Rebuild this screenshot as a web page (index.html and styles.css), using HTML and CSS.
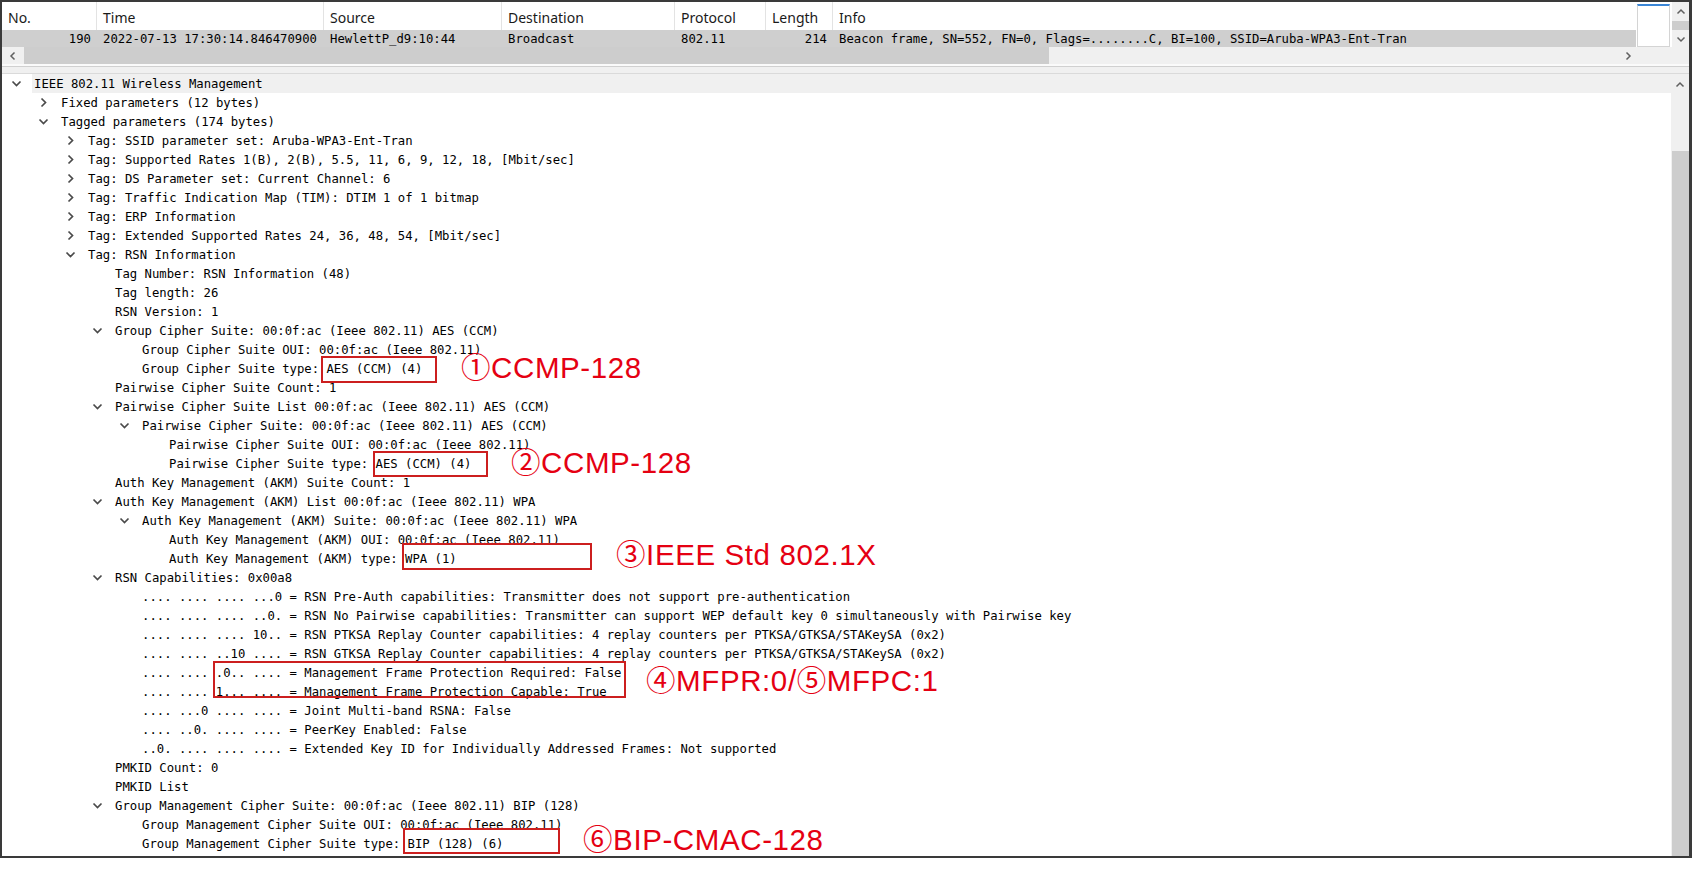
FILE: index.html
```html
<!DOCTYPE html>
<html>

<head>
  <meta charset="UTF-8">
  <title>802.11 Beacon - RSN Information</title>
  <link rel="stylesheet" href="styles.css">
</head>

<body>
  <div class="window">

    <!-- packet list -->
    <div class="top">
      <div class="plist">
        <div class="cols phead">
          <div class="cell">No.</div>
          <div class="cell">Time</div>
          <div class="cell">Source</div>
          <div class="cell">Destination</div>
          <div class="cell">Protocol</div>
          <div class="cell">Length</div>
          <div class="cell last">Info</div>
        </div>
        <div class="cols prow">
          <div class="cell num">190</div>
          <div class="cell">2022-07-13 17:30:14.846470900</div>
          <div class="cell">HewlettP_d9:10:44</div>
          <div class="cell">Broadcast</div>
          <div class="cell">802.11</div>
          <div class="cell num">214</div>
          <div class="cell last">Beacon frame, SN=552, FN=0, Flags=........C, BI=100, SSID=Aruba-WPA3-Ent-Tran</div>
        </div>
      </div>
      <div class="mapcol">
        <div class="minimap"></div>
      </div>
      <div class="vscroll">
        <div class="sarrow up"><svg viewBox="0 0 10 10"><path d="M1.5 6.5l3.5-3.5 3.5 3.5"/></svg></div>
        <div class="vthumb"></div>
        <div class="sarrow down"><svg viewBox="0 0 10 10"><path d="M1.5 3.5l3.5 3.5 3.5-3.5"/></svg></div>
      </div>
    </div>

    <div class="hscroll">
      <div class="harrow left"><svg viewBox="0 0 10 10"><path d="M6.5 1.5l-3.5 3.5 3.5 3.5"/></svg></div>
      <div class="hthumb"></div>
      <div class="hspace"></div>
      <div class="harrow right"><svg viewBox="0 0 10 10"><path d="M3.5 1.5l3.5 3.5-3.5 3.5"/></svg></div>
      <div class="corner"></div>
    </div>

    <div class="splitter"></div>

    <!-- packet details -->
    <div class="details">
      <div class="tree">
        <div class="row l0 focus"><span class="tog"><svg class="chev" viewBox="0 0 11 11"><path d="M1.5 3.5l4 4 4-4"/></svg></span><span class="txt">IEEE 802.11 Wireless Management</span></div>
        <div class="row l1"><span class="tog"><svg class="chev" viewBox="0 0 11 11"><path d="M3.5 1.5l4 4-4 4"/></svg></span><span class="txt">Fixed parameters (12 bytes)</span></div>
        <div class="row l1"><span class="tog"><svg class="chev" viewBox="0 0 11 11"><path d="M1.5 3.5l4 4 4-4"/></svg></span><span class="txt">Tagged parameters (174 bytes)</span></div>
        <div class="row l2"><span class="tog"><svg class="chev" viewBox="0 0 11 11"><path d="M3.5 1.5l4 4-4 4"/></svg></span><span class="txt">Tag: SSID parameter set: Aruba-WPA3-Ent-Tran</span></div>
        <div class="row l2"><span class="tog"><svg class="chev" viewBox="0 0 11 11"><path d="M3.5 1.5l4 4-4 4"/></svg></span><span class="txt">Tag: Supported Rates 1(B), 2(B), 5.5, 11, 6, 9, 12, 18, [Mbit/sec]</span></div>
        <div class="row l2"><span class="tog"><svg class="chev" viewBox="0 0 11 11"><path d="M3.5 1.5l4 4-4 4"/></svg></span><span class="txt">Tag: DS Parameter set: Current Channel: 6</span></div>
        <div class="row l2"><span class="tog"><svg class="chev" viewBox="0 0 11 11"><path d="M3.5 1.5l4 4-4 4"/></svg></span><span class="txt">Tag: Traffic Indication Map (TIM): DTIM 1 of 1 bitmap</span></div>
        <div class="row l2"><span class="tog"><svg class="chev" viewBox="0 0 11 11"><path d="M3.5 1.5l4 4-4 4"/></svg></span><span class="txt">Tag: ERP Information</span></div>
        <div class="row l2"><span class="tog"><svg class="chev" viewBox="0 0 11 11"><path d="M3.5 1.5l4 4-4 4"/></svg></span><span class="txt">Tag: Extended Supported Rates 24, 36, 48, 54, [Mbit/sec]</span></div>
        <div class="row l2"><span class="tog"><svg class="chev" viewBox="0 0 11 11"><path d="M1.5 3.5l4 4 4-4"/></svg></span><span class="txt">Tag: RSN Information</span></div>
        <div class="row l3"><span class="tog"></span><span class="txt">Tag Number: RSN Information (48)</span></div>
        <div class="row l3"><span class="tog"></span><span class="txt">Tag length: 26</span></div>
        <div class="row l3"><span class="tog"></span><span class="txt">RSN Version: 1</span></div>
        <div class="row l3"><span class="tog"><svg class="chev" viewBox="0 0 11 11"><path d="M1.5 3.5l4 4 4-4"/></svg></span><span class="txt">Group Cipher Suite: 00:0f:ac (Ieee 802.11) AES (CCM)</span></div>
        <div class="row l4"><span class="tog"></span><span class="txt">Group Cipher Suite OUI: 00:0f:ac (Ieee 802.11)</span></div>
        <div class="row l4"><span class="tog"></span><span class="txt">Group Cipher Suite type: AES (CCM) (4)</span></div>
        <div class="row l3"><span class="tog"></span><span class="txt">Pairwise Cipher Suite Count: 1</span></div>
        <div class="row l3"><span class="tog"><svg class="chev" viewBox="0 0 11 11"><path d="M1.5 3.5l4 4 4-4"/></svg></span><span class="txt">Pairwise Cipher Suite List 00:0f:ac (Ieee 802.11) AES (CCM)</span></div>
        <div class="row l4"><span class="tog"><svg class="chev" viewBox="0 0 11 11"><path d="M1.5 3.5l4 4 4-4"/></svg></span><span class="txt">Pairwise Cipher Suite: 00:0f:ac (Ieee 802.11) AES (CCM)</span></div>
        <div class="row l5"><span class="tog"></span><span class="txt">Pairwise Cipher Suite OUI: 00:0f:ac (Ieee 802.11)</span></div>
        <div class="row l5"><span class="tog"></span><span class="txt">Pairwise Cipher Suite type: AES (CCM) (4)</span></div>
        <div class="row l3"><span class="tog"></span><span class="txt">Auth Key Management (AKM) Suite Count: 1</span></div>
        <div class="row l3"><span class="tog"><svg class="chev" viewBox="0 0 11 11"><path d="M1.5 3.5l4 4 4-4"/></svg></span><span class="txt">Auth Key Management (AKM) List 00:0f:ac (Ieee 802.11) WPA</span></div>
        <div class="row l4"><span class="tog"><svg class="chev" viewBox="0 0 11 11"><path d="M1.5 3.5l4 4 4-4"/></svg></span><span class="txt">Auth Key Management (AKM) Suite: 00:0f:ac (Ieee 802.11) WPA</span></div>
        <div class="row l5"><span class="tog"></span><span class="txt">Auth Key Management (AKM) OUI: 00:0f:ac (Ieee 802.11)</span></div>
        <div class="row l5"><span class="tog"></span><span class="txt">Auth Key Management (AKM) type: WPA (1)</span></div>
        <div class="row l3"><span class="tog"><svg class="chev" viewBox="0 0 11 11"><path d="M1.5 3.5l4 4 4-4"/></svg></span><span class="txt">RSN Capabilities: 0x00a8</span></div>
        <div class="row l4"><span class="tog"></span><span class="txt">.... .... .... ...0 = RSN Pre-Auth capabilities: Transmitter does not support pre-authentication</span></div>
        <div class="row l4"><span class="tog"></span><span class="txt">.... .... .... ..0. = RSN No Pairwise capabilities: Transmitter can support WEP default key 0 simultaneously with Pairwise key</span></div>
        <div class="row l4"><span class="tog"></span><span class="txt">.... .... .... 10.. = RSN PTKSA Replay Counter capabilities: 4 replay counters per PTKSA/GTKSA/STAKeySA (0x2)</span></div>
        <div class="row l4"><span class="tog"></span><span class="txt">.... .... ..10 .... = RSN GTKSA Replay Counter capabilities: 4 replay counters per PTKSA/GTKSA/STAKeySA (0x2)</span></div>
        <div class="row l4"><span class="tog"></span><span class="txt">.... .... .0.. .... = Management Frame Protection Required: False</span></div>
        <div class="row l4"><span class="tog"></span><span class="txt">.... .... 1... .... = Management Frame Protection Capable: True</span></div>
        <div class="row l4"><span class="tog"></span><span class="txt">.... ...0 .... .... = Joint Multi-band RSNA: False</span></div>
        <div class="row l4"><span class="tog"></span><span class="txt">.... ..0. .... .... = PeerKey Enabled: False</span></div>
        <div class="row l4"><span class="tog"></span><span class="txt">..0. .... .... .... = Extended Key ID for Individually Addressed Frames: Not supported</span></div>
        <div class="row l3"><span class="tog"></span><span class="txt">PMKID Count: 0</span></div>
        <div class="row l3"><span class="tog"></span><span class="txt">PMKID List</span></div>
        <div class="row l3"><span class="tog"><svg class="chev" viewBox="0 0 11 11"><path d="M1.5 3.5l4 4 4-4"/></svg></span><span class="txt">Group Management Cipher Suite: 00:0f:ac (Ieee 802.11) BIP (128)</span></div>
        <div class="row l4"><span class="tog"></span><span class="txt">Group Management Cipher Suite OUI: 00:0f:ac (Ieee 802.11)</span></div>
        <div class="row l4"><span class="tog"></span><span class="txt">Group Management Cipher Suite type: BIP (128) (6)</span></div>

        <!-- red annotations -->
        <div class="mark m1"></div>
        <div class="note n1">①CCMP-128</div>
        <div class="mark m2"></div>
        <div class="note n2">②CCMP-128</div>
        <div class="mark m3"></div>
        <div class="note n3">③IEEE Std 802.1X</div>
        <div class="mark m4"></div>
        <div class="note n4">④MFPR:0/⑤MFPC:1</div>
        <div class="mark m6"></div>
        <div class="note n6">⑥BIP-CMAC-128</div>
      </div>
      <div class="dscroll">
        <div class="sarrow dtop"><svg viewBox="0 0 10 10"><path d="M1.5 6.5l3.5-3.5 3.5 3.5"/></svg></div>
        <div class="dtrack"></div>
        <div class="dthumb"></div>
      </div>
    </div>

  </div>
</body>

</html>
```

FILE: styles.css
```css
html,
body {
  margin: 0;
  padding: 0;
  background: #ffffff;
}

.window {
  width: 1692px;
  height: 858px;
  box-sizing: border-box;
  border: 2px solid #3a3a3a;
  border-right-width: 3px;
  display: flex;
  flex-direction: column;
  overflow: hidden;
  font-family: "DejaVu Sans Mono", "Liberation Mono", monospace;
  font-size: 12.25px;
  color: #000;
}

/* packet list */

.top {
  display: flex;
  height: 45px;
  flex: none;
}

.plist {
  flex: 1;
  background: #fff;
}

.cols {
  display: grid;
  grid-template-columns: 95px 227px 178px 173px 91px 67px 1fr;
}

.cell {
  padding: 0 6px;
  white-space: pre;
  overflow: hidden;
}

.phead {
  height: 28px;
  font-family: "Noto Sans", "Liberation Sans", sans-serif;
  font-size: 14px;
  color: #1a1a1a;
}

.phead .cell {
  line-height: 28px;
  padding-top: 2px;
  box-sizing: border-box;
  border-right: 1px solid #e3e3e3;
}

.phead .cell.last {
  border-right: none;
}

.prow {
  height: 17px;
  line-height: 18px;
  background: #cfcfcf;
}

.prow .num {
  text-align: right;
}

.mapcol {
  width: 36px;
  flex: none;
  box-sizing: border-box;
  padding: 2px 2px 0 1px;
  display: flex;
}

.minimap {
  flex: 1;
  background: #fff;
  border: 1px solid #d4d4d4;
  border-top: 2px solid #3b86d6;
}

.vscroll {
  width: 17px;
  flex: none;
  background: #f0f0f0;
  display: flex;
  flex-direction: column;
}

.sarrow {
  display: flex;
  align-items: center;
  justify-content: center;
}

.sarrow svg,
.harrow svg {
  width: 10px;
  height: 10px;
  fill: none;
  stroke: #606060;
  stroke-width: 1.5;
}

.sarrow.up {
  height: 19px;
}

.vthumb {
  height: 9px;
  background: #cdcdcd;
}

.sarrow.down {
  flex: 1;
}

.hscroll {
  height: 17px;
  flex: none;
  display: flex;
  background: #f0f0f0;
}

.harrow {
  display: flex;
  align-items: center;
  justify-content: center;
}

.harrow.left {
  width: 22px;
}

.hthumb {
  width: 1025px;
  background: #cdcdcd;
}

.hspace {
  flex: 1;
}

.harrow.right {
  width: 16px;
}

.corner {
  width: 53px;
}

.splitter {
  height: 10px;
  flex: none;
  box-sizing: border-box;
  background: #f0f0f0;
  border-top: 2px solid #fafafa;
  border-bottom: 1px solid #dadada;
  box-shadow: inset 0 1px 0 #d0d0d0;
}

/* packet details */

.details {
  flex: 1;
  display: flex;
  min-height: 0;
}

.tree {
  flex: 1;
  position: relative;
  overflow: hidden;
  background: #fff;
}

.row {
  display: flex;
  height: 19px;
  line-height: 20px;
  white-space: pre;
}

.l1 {
  padding-left: 27px;
}

.l2 {
  padding-left: 54px;
}

.l3 {
  padding-left: 81px;
}

.l4 {
  padding-left: 108px;
}

.l5 {
  padding-left: 135px;
}

.tog {
  width: 30px;
  flex: none;
  box-sizing: border-box;
  padding-left: 9px;
  display: flex;
  align-items: center;
}

.chev {
  width: 11px;
  height: 11px;
  fill: none;
  stroke: #4a4a4a;
  stroke-width: 1.7;
}

.txt {
  flex: 1;
  padding-left: 2px;
}

.focus .txt {
  background: #f0f0f0;
}

.dscroll {
  width: 18px;
  flex: none;
  background: #f0f0f0;
  display: flex;
  flex-direction: column;
}

.sarrow.dtop {
  height: 22px;
}

.dtrack {
  height: 55px;
}

.dthumb {
  flex: 1;
  margin-left: 1px;
  background: #cdcdcd;
}

/* annotations drawn over the tree */

.mark {
  position: absolute;
  box-sizing: border-box;
  border: 2px solid #cc1f1f;
}

.m1 {
  left: 319px;
  top: 282px;
  width: 116px;
  height: 27px;
}

.m2 {
  left: 371px;
  top: 377px;
  width: 115px;
  height: 26px;
}

.m3 {
  left: 400px;
  top: 469px;
  width: 190px;
  height: 27px;
}

.m4 {
  left: 211px;
  top: 587px;
  width: 413px;
  height: 37px;
}

.m6 {
  left: 401px;
  top: 754px;
  width: 157px;
  height: 26px;
}

.note {
  position: absolute;
  white-space: nowrap;
  font-family: "Liberation Sans", "Noto Sans CJK JP", sans-serif;
  font-size: 29.5px;
  line-height: 30px;
  letter-spacing: 0.6px;
  color: #e50012;
}

.n1 {
  left: 459px;
  top: 279px;
}

.n2 {
  left: 509px;
  top: 374px;
}

.n3 {
  left: 614px;
  top: 466px;
}

.n4 {
  left: 644px;
  top: 592px;
}

.n6 {
  left: 581px;
  top: 751px;
}
```
